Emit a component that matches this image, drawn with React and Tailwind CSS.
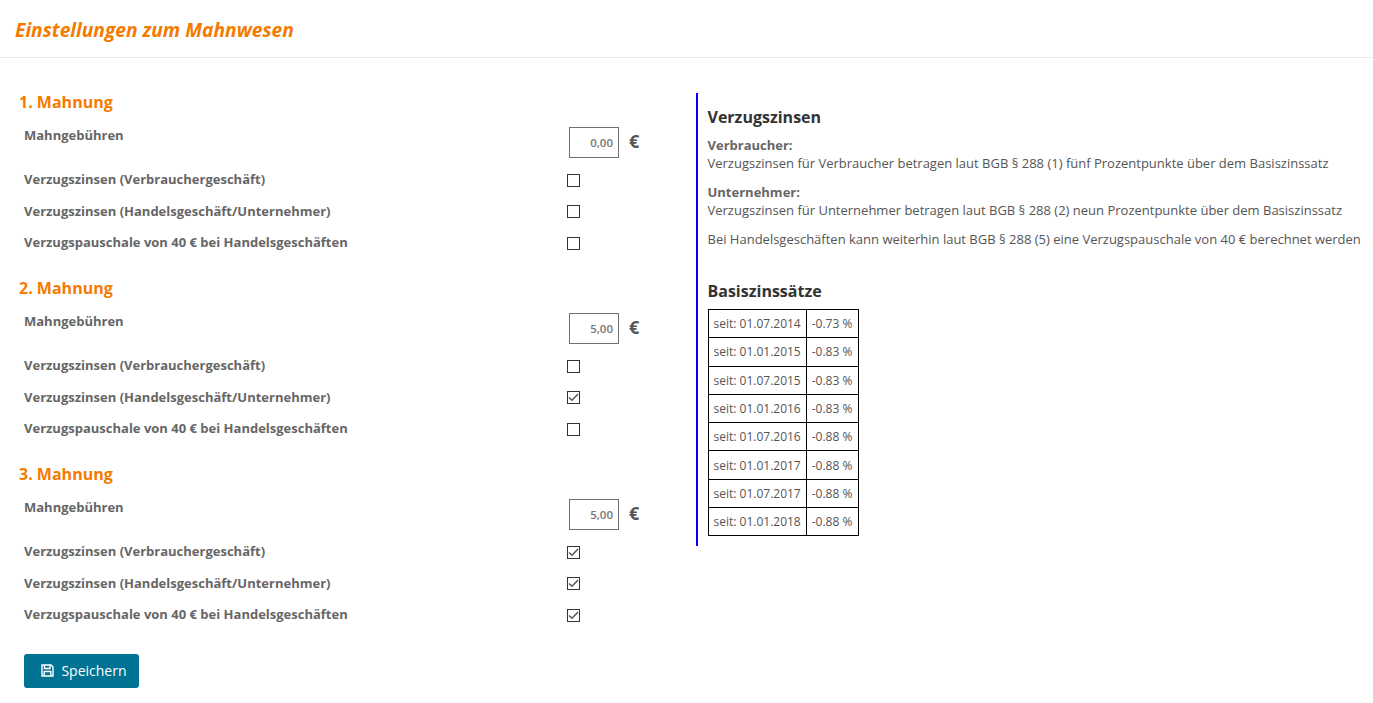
import React from "react";

const sections = [
  { title: "1. Mahnung", fee: "0,00", checks: [false, false, false] },
  { title: "2. Mahnung", fee: "5,00", checks: [false, true, false] },
  { title: "3. Mahnung", fee: "5,00", checks: [true, true, true] },
];

const labels = [
  "Verzugszinsen (Verbrauchergeschäft)",
  "Verzugszinsen (Handelsgeschäft/Unternehmer)",
  "Verzugspauschale von 40 € bei Handelsgeschäften",
];

const rates = [
  ["seit: 01.07.2014", "-0.73 %"],
  ["seit: 01.01.2015", "-0.83 %"],
  ["seit: 01.07.2015", "-0.83 %"],
  ["seit: 01.01.2016", "-0.83 %"],
  ["seit: 01.07.2016", "-0.88 %"],
  ["seit: 01.01.2017", "-0.88 %"],
  ["seit: 01.07.2017", "-0.88 %"],
  ["seit: 01.01.2018", "-0.88 %"],
];

const Check = ({ checked }) => (
  <span className="flex h-[13px] w-[13px] items-center justify-center border border-[#333] bg-white">
    {checked && (
      <svg width="11" height="11" viewBox="0 0 11 11" fill="none">
        <path d="M1 5.5 L4 8.2 L10 2" stroke="#555" strokeWidth="1.5" />
      </svg>
    )}
  </span>
);

const SaveIcon = () => (
  <svg width="13" height="13" viewBox="0 0 13 13" fill="none" stroke="white" strokeWidth="1.4">
    <path d="M1 1 H10 L12 3 V12 H1 Z" />
    <path d="M3.5 1 V4.5 H9 V1" />
    <path d="M3.2 12 V7.5 H9.8 V12" />
  </svg>
);

const Section = ({ title, fee, checks }) => (
  <div className="h-[186px]">
    <h3 className="h-[18px] pl-[19px] text-[16px] font-bold leading-[18px] text-[#f47b00]">{title}</h3>
    <div className="mt-[6px] flex h-[45px] pl-6">
      <span className="mt-[9px] w-[545px] text-[13px] font-bold leading-[18px] text-[#666]">Mahngebühren</span>
      <span className="mt-[10px] flex h-[31px] w-[50px] items-center justify-end border border-[#707070] pr-[5px] text-[11.5px] font-semibold text-[#777]">
        {fee}
      </span>
      <span className="mt-[9px] ml-[10px] text-[18px] font-bold leading-[31px] text-[#555]">€</span>
    </div>
    {labels.map((label, i) => (
      <div key={label} className={i === 0 ? "mt-[9px] flex h-[18.5px] items-center pl-6" : "mt-[13px] flex h-[18.5px] items-center pl-6"}>
        <span className="mb-[2px] w-[543px] text-[13px] font-bold leading-[18px] text-[#666]">{label}</span>
        <Check checked={checks[i]} />
      </div>
    ))}
  </div>
);

export default function App() {
  return (
    <div className="min-h-[703px] bg-white font-['Open_Sans',sans-serif] text-[#555]">
      <header className="flex h-[58px] items-center border-b border-[#e8e8e8] pl-[15px] pt-[4px]">
        <h1 className="text-[19.2px] font-bold italic text-[#f47b00]">Einstellungen zum Mahnwesen</h1>
      </header>

      <main className="flex pt-[35px]">
        <div className="w-[696px]">
          {sections.map((s) => (
            <Section key={s.title} {...s} />
          ))}
          <button className="mt-[3px] ml-6 flex h-[34px] w-[115px] items-center justify-center gap-[7px] rounded-[3px] bg-[#007395] pb-[2px] pl-[5px] text-[14px] text-white">
            <SaveIcon />
            Speichern
          </button>
        </div>

        <aside className="h-[453px] border-l-2 border-[#0000ff] pl-[9.5px]">
          <h2 className="mt-[13px] text-[16px] font-bold leading-[22px] text-[#333]">Verzugszinsen</h2>
          <p className="mt-[8px] text-[13px] leading-[18px]">
            <strong className="block text-[#666]">Verbraucher:</strong>
            Verzugszinsen für Verbraucher betragen laut BGB § 288 (1) fünf Prozentpunkte über dem Basiszinssatz
          </p>
          <p className="mt-[11px] text-[13px] leading-[18px]">
            <strong className="block text-[#666]">Unternehmer:</strong>
            Verzugszinsen für Unternehmer betragen laut BGB § 288 (2) neun Prozentpunkte über dem Basiszinssatz
          </p>
          <p className="mt-[11px] text-[13px] leading-[18px]">
            Bei Handelsgeschäften kann weiterhin laut BGB § 288 (5) eine Verzugspauschale von 40 € berechnet werden
          </p>
          <h2 className="mt-[32px] text-[16px] font-bold leading-[22px] text-[#333]">Basiszinssätze</h2>
          <table className="mt-[7px] border-collapse text-[12px]">
            <tbody>
              {rates.map(([since, rate]) => (
                <tr key={since} className="h-[28.3px]">
                  <td className="w-[98px] whitespace-nowrap border border-black px-[5px] pt-[1px] leading-none">{since}</td>
                  <td className="w-[52px] whitespace-nowrap border border-black px-[5px] pt-[1px] leading-none">{rate}</td>
                </tr>
              ))}
            </tbody>
          </table>
        </aside>
      </main>
    </div>
  );
}
